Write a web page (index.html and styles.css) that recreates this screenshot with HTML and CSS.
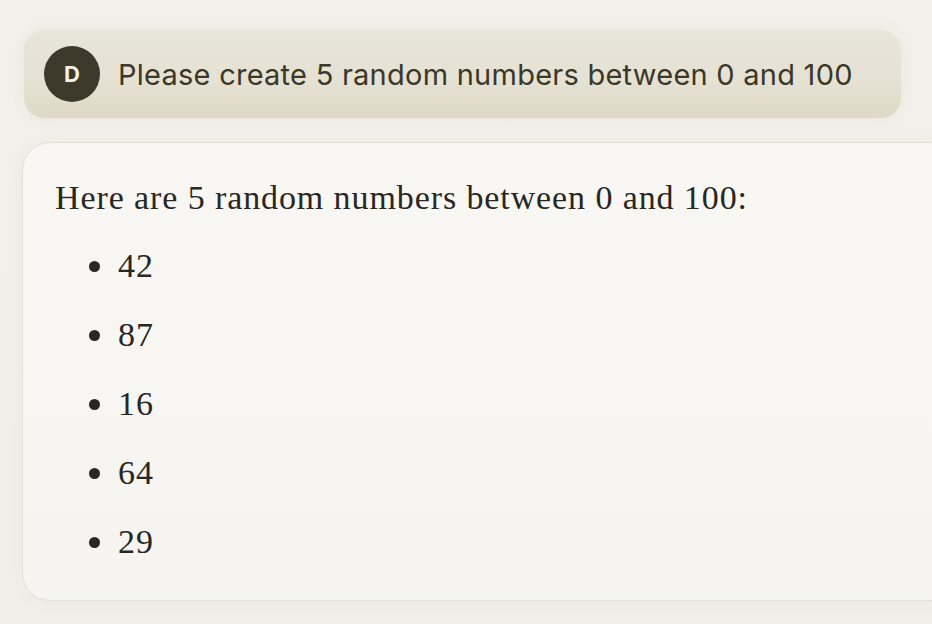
FILE: index.html
```html
<!DOCTYPE html>
<html lang="en">
<head>
<meta charset="utf-8">
<title>Chat</title>
<link rel="stylesheet" href="styles.css">
</head>
<body>
<main class="thread">
  <div class="user-msg">
    <div class="avatar">D</div>
    <p class="user-text">Please create 5 random numbers between 0 and 100</p>
  </div>
  <div class="reply">
    <p class="reply-intro">Here are 5 random numbers between 0 and 100:</p>
    <ul class="reply-list">
      <li>42</li>
      <li>87</li>
      <li>16</li>
      <li>64</li>
      <li>29</li>
    </ul>
  </div>
</main>
</body>
</html>
```
FILE: styles.css
```css
html, body {
  margin: 0;
  padding: 0;
  height: 100%;
  overflow: hidden;
}
body {
  background: linear-gradient(180deg, #f2f0ea 0%, #f1efe9 100%);
}
.thread {
  display: flex;
  flex-direction: column;
  gap: 24px;
  padding: 30px 31px 0 24px;
}
.user-msg {
  display: flex;
  align-items: center;
  gap: 18px;
  height: 88px;
  box-sizing: border-box;
  padding: 0 20px;
  border-radius: 20px;
  background: linear-gradient(180deg, #e8e5d9 0%, #e5e1d3 60%, #dfd8c5 100%);
  box-shadow: 0 0 16px rgba(120, 110, 80, 0.06);
}
.avatar {
  flex: 0 0 56px;
  width: 56px;
  height: 56px;
  border-radius: 50%;
  background: #3d3a2b;
  color: #f4f2ea;
  display: flex;
  align-items: center;
  justify-content: center;
  font-family: "Inter", "Liberation Sans", sans-serif;
  font-weight: 700;
  font-size: 22px;
}
.user-text {
  margin: 0;
  font-family: "Inter", "Liberation Sans", sans-serif;
  font-size: 29px;
  color: #3b3828;
  letter-spacing: 0.25px;
}
.reply {
  margin-left: -2px;
  margin-right: -60px;
  border: 1px solid #e2dfd7;
  border-radius: 28px;
  background: linear-gradient(180deg, #f8f7f4 0%, #f5f4f0 100%);
  padding: 31px 32px 34px 32px;
  box-shadow: 0 2px 18px rgba(120, 110, 80, 0.05);
  font-family: "Liberation Serif", "DejaVu Serif", serif;
  font-size: 34px;
  letter-spacing: 0.9px;
  line-height: 48px;
  color: #29271f;
}
.reply-intro {
  margin: 0 0 20px 0;
}
.reply-list {
  margin: 0;
  padding: 0 0 0 34px;
  list-style: none;
}
.reply-list li {
  display: flex;
  align-items: center;
  gap: 18px;
  margin-bottom: 21px;
}
.reply-list li::before {
  content: "";
  flex: 0 0 11px;
  width: 11px;
  height: 11px;
  border-radius: 50%;
  background: #29271f;
}
.reply-list li:last-child {
  margin-bottom: 0;
}
```
